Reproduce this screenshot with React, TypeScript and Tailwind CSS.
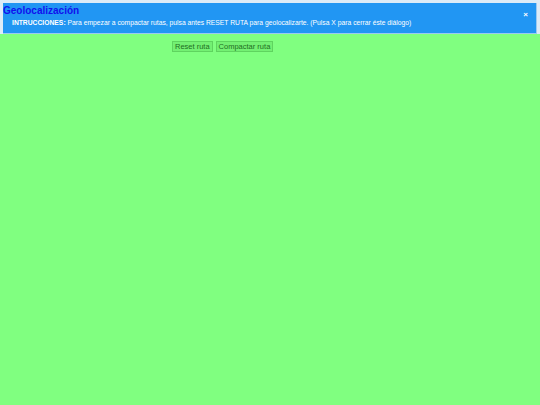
import React from "react";

export default function App() {
  return (
    <div
      className="w-[540px] h-[405px] bg-[#80ff80] overflow-hidden"
      style={{ fontFamily: '"Liberation Sans", Arial, sans-serif' }}
    >
      <div className="bg-[#dcebf7] pt-[3px] pl-[3px] pr-[3px]">
        <div className="relative bg-[#2196f3] border-r border-b border-[#9cc9f0] h-[31px]">
          <div className="text-[10px] leading-[13px] font-bold text-[#1010ee] pt-[1px]">
            Geolocalización
          </div>
          <div className="text-[6.75px] leading-[10px] text-white pl-[9px] pt-[1px]">
            <b>INTRUCCIONES:</b> Para empezar a compactar rutas, pulsa antes RESET RUTA para geolocalizarte. (Pulsa X para cerrar éste diálogo)
          </div>
          <span className="absolute right-[8px] top-[8px] text-[8px] leading-[8px] font-bold text-white">
            ×
          </span>
        </div>
      </div>
      <div className="flex gap-[3px] pl-[172px] pt-[7px]">
        <button className="h-[11px] px-[2px] border border-[#5fd45f] bg-[#73f073] text-[#1f6f1f] text-[7.5px] leading-[9px]">
          Reset ruta
        </button>
        <button className="h-[11px] px-[2px] border border-[#5fd45f] bg-[#73f073] text-[#1f6f1f] text-[7.5px] leading-[9px]">
          Compactar ruta
        </button>
      </div>
    </div>
  );
}
